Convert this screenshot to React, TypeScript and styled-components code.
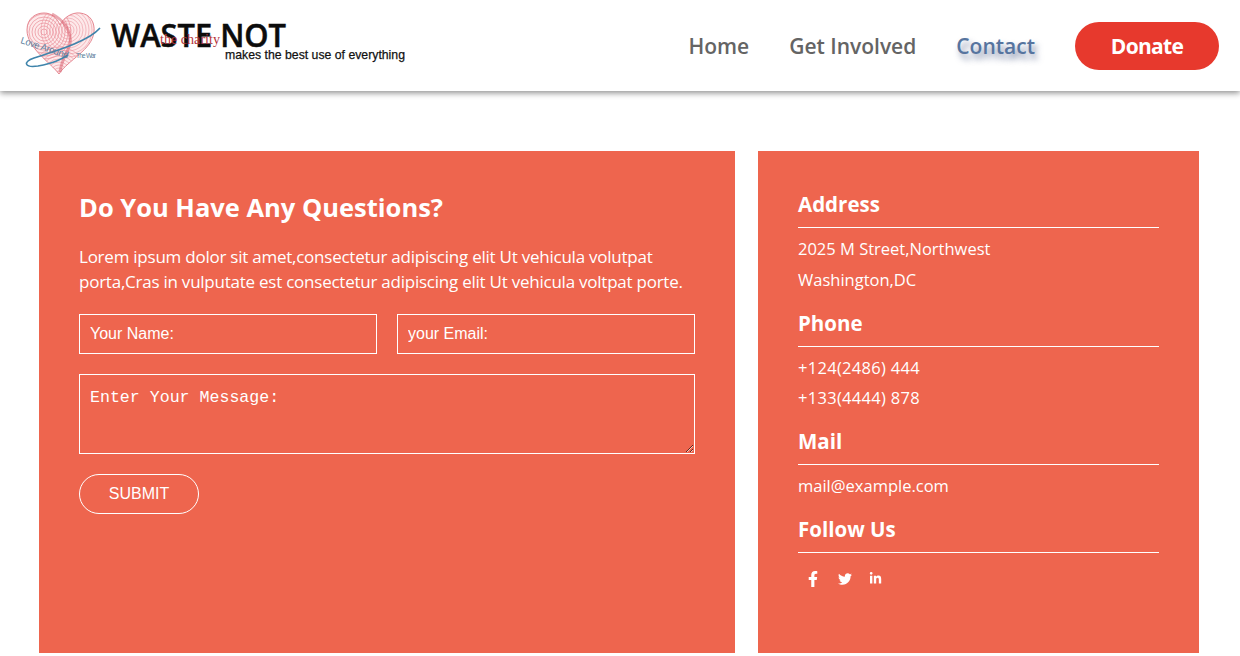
import React from 'react';
import styled, { createGlobalStyle } from 'styled-components';
import { FaFacebookF, FaTwitter, FaLinkedinIn } from 'react-icons/fa';

const heartPath =
    'M59 74 C50 62 27 48 27 30 C27 18 36 13 44 13 C52 13 57 18 60 25 C63 18 72 12 80 13 C90 14 95 22 94 32 C92 50 68 60 59 74 Z';

function Logo() {
    const radii = [3, 6, 9, 12, 15, 18, 21, 24, 27];
    return (
        <svg width="420" height="91" viewBox="0 0 420 91">
            <defs>
                <clipPath id="heart-clip">
                    <path d={heartPath} />
                </clipPath>
            </defs>
            <path d={heartPath} fill="#fde9ea" stroke="#e58791" strokeWidth="1" />
            <g clipPath="url(#heart-clip)" fill="none" stroke="#ea8c97" strokeWidth="0.7">
                {radii.map((r) => (
                    <circle key={`l${r}`} cx="44" cy="32" r={r} />
                ))}
                {radii.map((r) => (
                    <circle key={`r${r}`} cx="68" cy="30" r={r} opacity="0.75" />
                ))}
                {radii.map((r) => (
                    <circle key={`b${r}`} cx="59" cy="74" r={r} opacity="0.8" />
                ))}
            </g>
            <path d="M52 14 C64 20 72 32 70 44 C68 52 62 58 60 72" fill="none" stroke="#d8606f" strokeWidth="3" opacity="0.55" />
            <path d="M100 28 C88 42 52 52 34 58 C22 62 25 68 38 66 C54 63 60 60 68 55" fill="none" stroke="#3f84ab" strokeWidth="1.6" />
            <text x="20" y="43" fontFamily="Liberation Sans, sans-serif" fontSize="9.5" fill="#5c7f9e" transform="rotate(18 20 43)" textLength="50">Love Around</text>
            <text x="76" y="58" fontFamily="Liberation Sans, sans-serif" fontSize="6.5" fill="#5c7f9e" textLength="20">The War</text>
            <text x="111" y="47" fontFamily="Open Sans, sans-serif" fontWeight="600" fontSize="32" stroke="#0c0c0c" strokeWidth="0.5" fill="#0c0c0c" textLength="175" lengthAdjust="spacingAndGlyphs">WASTE NOT</text>
            <text x="160" y="44" fontFamily="Liberation Serif, serif" fontSize="14" fill="#b5343c" textLength="60" lengthAdjust="spacingAndGlyphs">the charity</text>
            <text x="225" y="59" fontFamily="Liberation Sans, sans-serif" fontSize="13" stroke="#111" strokeWidth="0.25" fill="#111" textLength="180" lengthAdjust="spacingAndGlyphs">makes the best use of everything</text>
        </svg>
    );
}

export default function App() {
    return (
        <>
            <GlobalStyle />
            <Header>
                <Logo />
                <Nav>
                    <NavLink>Home</NavLink>
                    <NavLink>Get Involved</NavLink>
                    <NavLink $active>Contact</NavLink>
                    <DonateButton>Donate</DonateButton>
                </Nav>
            </Header>
            <Main>
                <FormCard>
                    <FormTitle>Do You Have Any Questions?</FormTitle>
                    <Intro>
                        Lorem ipsum dolor sit amet,consectetur adipiscing elit Ut vehicula volutpat
                        porta,Cras in vulputate est consectetur adipiscing elit Ut vehicula voltpat porte.
                    </Intro>
                    <InputRow>
                        <Input placeholder="Your Name:" />
                        <Input placeholder="your Email:" />
                    </InputRow>
                    <MessageBox placeholder="Enter Your Message:" />
                    <SubmitButton>SUBMIT</SubmitButton>
                </FormCard>
                <InfoCard>
                    <InfoHeading>Address</InfoHeading>
                    <InfoLine>2025 M Street,Northwest</InfoLine>
                    <InfoLine>Washington,DC</InfoLine>
                    <InfoHeading>Phone</InfoHeading>
                    <InfoLine $digits>+124(2486) 444</InfoLine>
                    <InfoLine $digits>+133(4444) 878</InfoLine>
                    <InfoHeading>Mail</InfoHeading>
                    <InfoLine>mail@example.com</InfoLine>
                    <InfoHeading>Follow Us</InfoHeading>
                    <Socials>
                        <FaFacebookF size={16} />
                        <FaTwitter size={14} />
                        <FaLinkedinIn size={13} />
                    </Socials>
                </InfoCard>
            </Main>
        </>
    );
}

const GlobalStyle = createGlobalStyle`
    body {
        margin: 0;
        background: #fff;
        font-family: "Open Sans", "Noto Sans", sans-serif;
    }
    ::placeholder {
        color: #fff;
        opacity: 1;
    }
`;

const Header = styled.header`
    display: flex;
    justify-content: space-between;
    align-items: center;
    height: 91px;
    padding-right: 21px;
    background: #fff;
    box-shadow: 0 2px 6px rgba(0, 0, 0, 0.45);
`;

const Nav = styled.nav`
    display: flex;
    align-items: center;
    gap: 40px;
`;

const NavLink = styled.a<{ $active?: boolean }>`
    font-size: 21px;
    font-weight: 600;
    color: ${(p) => (p.$active ? '#56749f' : '#646464')};
    text-shadow: ${(p) => (p.$active ? '3px 5px 6px rgba(40, 60, 110, 0.6)' : 'none')};
`;

const DonateButton = styled.button`
    width: 144px;
    height: 48px;
    border: none;
    border-radius: 24px;
    background: #e7392d;
    color: #fff;
    font: inherit;
    font-size: 21px;
    font-weight: 700;
    letter-spacing: -0.7px;
`;

const Main = styled.main`
    display: flex;
    gap: 23px;
    padding: 60px 41px 3px 39px;
`;

const FormCard = styled.section`
    box-sizing: border-box;
    width: 696px;
    height: 502px;
    padding: 40px;
    background: #ee654e;
    color: #fff;
`;

const FormTitle = styled.h2`
    margin: 0 0 20px;
    font-size: 25.5px;
    line-height: 33px;
    font-weight: 700;
`;

const Intro = styled.p`
    margin: 0 0 20px;
    font-size: 17px;
    line-height: 25px;
    letter-spacing: -0.24px;
`;

const InputRow = styled.div`
    display: grid;
    grid-template-columns: 1fr 1fr;
    gap: 20px;
    margin-bottom: 20px;
`;

const Input = styled.input`
    box-sizing: border-box;
    width: 100%;
    height: 40px;
    padding: 0 10px;
    border: 1px solid #fff;
    background: transparent;
    color: #fff;
    font-family: "Liberation Sans", Arial, sans-serif;
    font-size: 16px;
    outline: none;
`;

const MessageBox = styled.textarea`
    display: block;
    box-sizing: border-box;
    width: 100%;
    height: 80px;
    padding: 11px 10px 10px;
    border: 1px solid #fff;
    background: transparent;
    color: #fff;
    font-family: "Liberation Mono", monospace;
    font-size: 16.6px;
    line-height: 24px;
    outline: none;
`;

const SubmitButton = styled.button`
    display: block;
    width: 120px;
    height: 40px;
    margin-top: 20px;
    border: 1px solid #fff;
    border-radius: 20px;
    background: transparent;
    color: #fff;
    font-family: "Liberation Sans", Arial, sans-serif;
    font-size: 16px;
`;

const InfoCard = styled.aside`
    box-sizing: border-box;
    width: 441px;
    height: 502px;
    padding: 37px 40px 0;
    background: #ee654e;
    color: #fff;
`;

const InfoHeading = styled.h3`
    margin: 0 0 6px;
    padding-bottom: 7px;
    border-bottom: 1px solid #fff;
    font-size: 20.5px;
    line-height: 32px;
    font-weight: 700;
`;

const InfoLine = styled.p<{ $digits?: boolean }>`
    margin: 0;
    font-size: 16.5px;
    line-height: 30.75px;
    letter-spacing: ${(p) => (p.$digits ? '0.3px' : '0')};
    & + h3 {
        margin-top: 11px;
    }
`;

const Socials = styled.div`
    display: flex;
    align-items: center;
    gap: 17px;
    padding: 12px 7px;
`;
